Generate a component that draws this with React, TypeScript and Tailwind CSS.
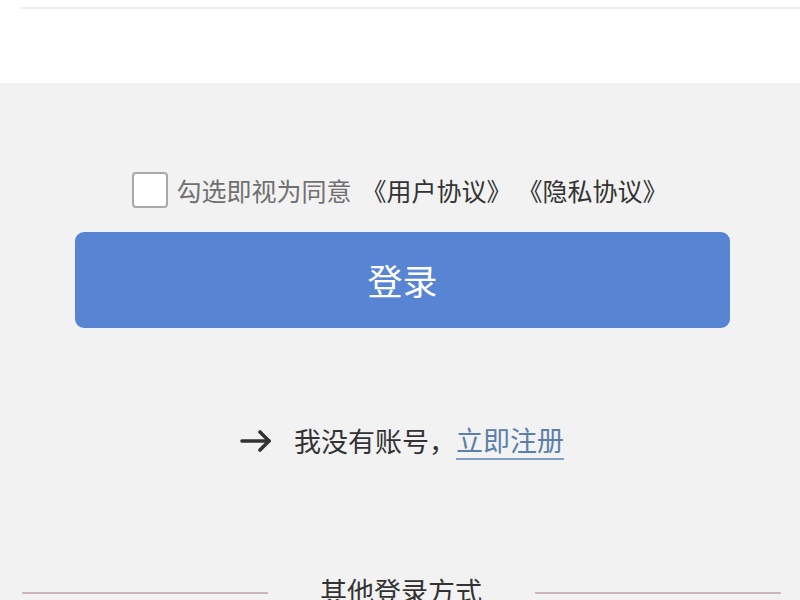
import React from 'react';

const font = { fontFamily: '"Noto Sans CJK SC", "Noto Sans", sans-serif' };

function ArrowRight() {
  return (
    <svg width="32" height="22" viewBox="0 0 32 22" fill="none" stroke="#333" strokeWidth="3.6" strokeLinecap="round" strokeLinejoin="round">
      <path d="M2 11h27" />
      <path d="M20 2l9 9-9 9" />
    </svg>
  );
}

export default function App() {
  return (
    <div className="w-[800px] h-[600px] overflow-hidden bg-[#f2f2f2]" style={font}>
      <div className="h-[83px] bg-white pt-[7px] pl-[20px]">
        <div className="h-[2px] bg-[#ececec]" />
      </div>

      <div className="mt-[89px] flex items-center justify-center">
        <div className="w-[36px] h-[36px] rounded-[4px] border-2 border-[#a9a9a9] bg-white" />
        <span className="ml-[8px] text-[25px] leading-[36px] text-[#707070]">勾选即视为同意</span>
        <span className="ml-[10px] text-[25px] leading-[36px] text-[#333]">《用户协议》</span>
        <span className="ml-[6px] text-[25px] leading-[36px] text-[#333]">《隐私协议》</span>
      </div>

      <button className="ml-[75px] mt-[24px] w-[655px] h-[96px] rounded-[9px] bg-[#5884d4] text-white text-[35px] flex items-center justify-center">
        登录
      </button>

      <div className="mt-[94px] flex items-center justify-center pl-[4px]">
        <ArrowRight />
        <span className="ml-[22px] text-[27px] leading-[36px] text-[#333]">我没有账号，</span>
        <span className="text-[27px] leading-[36px] text-[#5a80aa] border-b-2 border-[#7f9fc4]">立即注册</span>
      </div>

      <div className="mt-[113px] flex items-center pl-[22px]">
        <div className="w-[246px] h-[2px] bg-[#c9b7ba] mt-[4px]" />
        <span className="ml-[52px] text-[27px] leading-[36px] text-[#333]">其他登录方式</span>
        <div className="ml-[53px] w-[246px] h-[2px] bg-[#c9b7ba] mt-[4px]" />
      </div>
    </div>
  );
}
